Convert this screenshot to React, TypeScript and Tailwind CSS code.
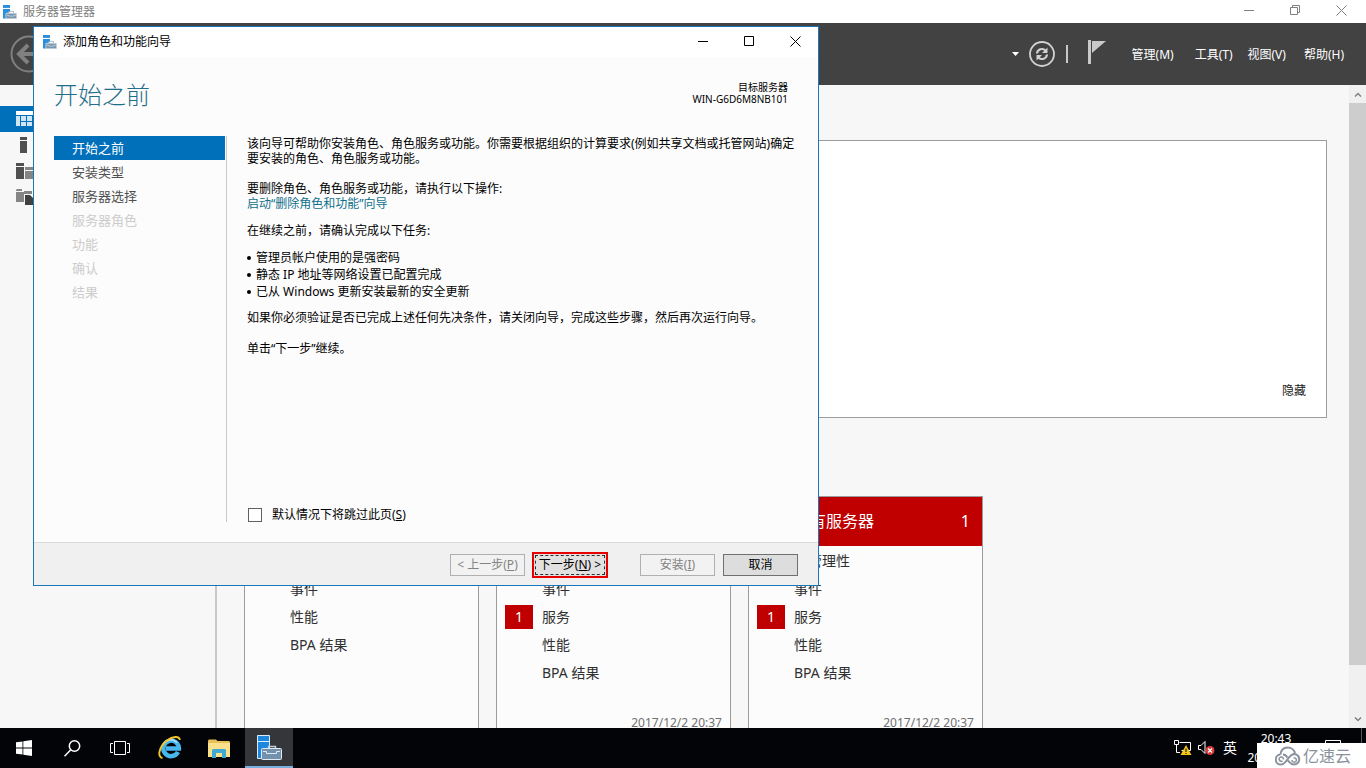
import type { ReactNode } from 'react';

const FONT = "font-['Noto_Sans','Noto_Sans_CJK_SC',sans-serif]";

const NAV_STEPS = [
  { label: '开始之前', state: 'active' },
  { label: '安装类型', state: 'enabled' },
  { label: '服务器选择', state: 'enabled' },
  { label: '服务器角色', state: 'disabled' },
  { label: '功能', state: 'disabled' },
  { label: '确认', state: 'disabled' },
  { label: '结果', state: 'disabled' },
];

const TASKS = ['管理员帐户使用的是强密码', '静态 IP 地址等网络设置已配置完成', '已从 Windows 更新安装最新的安全更新'];

interface Row { label: string; count?: number }

const TILES: { title?: string; count?: number; rows: Row[]; time?: string }[] = [
  { rows: [{ label: '' }, { label: '事件' }, { label: '性能' }, { label: 'BPA 结果' }] },
  {
    rows: [{ label: '' }, { label: '事件' }, { label: '服务', count: 1 }, { label: '性能' }, { label: 'BPA 结果' }],
    time: '2017/12/2 20:37',
  },
  {
    title: '所有服务器',
    count: 1,
    rows: [{ label: '可管理性' }, { label: '事件' }, { label: '服务', count: 1 }, { label: '性能' }, { label: 'BPA 结果' }],
    time: '2017/12/2 20:37',
  },
];

function ServerIcon({ className }: { className: string }) {
  return (
    <svg viewBox="0 0 24 24" className={className} aria-hidden="true">
      <path d="M0 0h12v5H0z" fill="#2b8fdc" />
      <path d="M0 7h12v5h-2v2H5v9H0z" fill="#2b8fdc" />
      <path d="M10 14v-3h8v3" fill="none" stroke="#9fb4c4" strokeWidth="1.5" />
      <rect x="5" y="14" width="18.5" height="9.5" rx="1" fill="#7896ad" stroke="#e6eef4" strokeWidth="1" />
      <path d="M6 17.5h4v1.5h9v-1.5h4" fill="none" stroke="#e6eef4" />
    </svg>
  );
}

/* Large variant with a light outline, for dark backgrounds */
function ServerTaskIcon() {
  return (
    <svg width="25" height="25" viewBox="0 0 25 25" aria-hidden="true">
      <path d="M.5.5h12v23H.5z" fill="#1c87dc" stroke="#d8ecfa" />
      <path d="M1 6.500h11" stroke="#d8ecfa" />
      <path d="M11.500 14v-2.500h7V14" fill="none" stroke="#c3d0da" strokeWidth="1.500" />
      <rect x="4.500" y="13.500" width="20" height="11" rx="1" fill="#7390ad" stroke="#dfe9f1" />
      <path d="M6 16.500h3.500v2h10v-2H23" fill="none" stroke="#dfe9f1" />
    </svg>
  );
}

function MinimizeIcon() {
  return (
    <svg width="11" height="11" viewBox="0 0 11 11" aria-hidden="true">
      <path d="M0 5.5h10" stroke="currentColor" />
    </svg>
  );
}

function MaximizeIcon() {
  return (
    <svg width="11" height="11" viewBox="0 0 11 11" aria-hidden="true">
      <path d="M.5.5h9v9H.5z" fill="none" stroke="currentColor" />
    </svg>
  );
}

function RestoreIcon() {
  return (
    <svg width="11" height="11" viewBox="0 0 11 11" aria-hidden="true">
      <path d="M.5 2.500h7v7h-7zM2.500 2.500v-2h7v7h-2" fill="none" stroke="currentColor" />
    </svg>
  );
}

function CloseIcon() {
  return (
    <svg width="11" height="11" viewBox="0 0 11 11" aria-hidden="true">
      <path d="M.5.500l10 10M10.500.500l-10 10" stroke="currentColor" />
    </svg>
  );
}

function WindowButton({ label, children }: { label: string; children: ReactNode }) {
  return (
    <button aria-label={label} className="flex h-full w-[46px] items-center justify-center">
      {children}
    </button>
  );
}

function ManagerHeader() {
  return (
    <header className="flex h-[62px] shrink-0 items-center bg-[#424242] pr-[22px] pl-[10px] text-xs text-white">
      <button aria-label="后退" className="text-[#808080]">
        <svg width="38" height="38" viewBox="0 0 38 38" fill="none" stroke="currentColor" aria-hidden="true">
          <circle cx="19" cy="19" r="17.500" strokeWidth="2" />
          <path d="M29 19H10M18 10l-9 9 9 9" strokeWidth="4" />
        </svg>
      </button>
      <div className="ml-auto flex items-center">
        <button aria-label="通知列表">
          <svg width="7" height="4" viewBox="0 0 7 4" aria-hidden="true"><path d="M0 0h7L3.500 4z" fill="#fff" /></svg>
        </button>
        <button aria-label="刷新" className="ml-[10px]">
          <svg width="26" height="26" viewBox="0 0 26 26" fill="none" stroke="#d2d2d2" aria-hidden="true">
            <circle cx="13" cy="13" r="12" strokeWidth="1.800" />
            <path d="M8 12.500a5 5 0 0 1 8.500-3M18 13.500a5 5 0 0 1-8.500 3" strokeWidth="2.200" />
            <path d="M18.500 6.500v5.500H13zM7.500 19.500V14H13z" fill="#d2d2d2" stroke="none" />
          </svg>
        </button>
        <span className="ml-[11px] h-[18px] w-0.5 bg-[#c8c8c8]" />
        <button aria-label="通知" className="ml-5">
          <svg width="18" height="24" viewBox="0 0 18 24" className="-mt-1" aria-hidden="true">
            <path d="M0 0h3v24H0zM4 1h14L4 13z" fill="#c9c9c9" />
          </svg>
        </button>
        <nav className="ml-[26px] flex pt-0.5">
          <button className="mr-[21px]">管理(M)</button>
          <button className="mr-[15px]">工具(T)</button>
          <button className="mr-[18px]">视图(V)</button>
          <button>帮助(H)</button>
        </nav>
      </div>
    </header>
  );
}

function Sidebar() {
  const item = 'flex h-[26px] w-full items-center pl-4';
  return (
    <aside className="w-[217px] shrink-0 border-r-2 border-[#c8c8c8] bg-[#f7f7f7] pt-[21px]">
      <button aria-label="仪表板" className={`${item} bg-[#0070ba]`}>
        <svg width="17" height="16" viewBox="0 0 17 16" aria-hidden="true">
          <path d="M0 0h17v4H0z" fill="#fff" />
          <path d="M0 5h4v10H0zM5 5h5v5H5zM11 5h5v5h-5zM5 11h5v4H5zM11 11h5v4h-5z" fill="#cfe5f4" />
        </svg>
      </button>
      <button aria-label="本地服务器" className={item}>
        <svg width="17" height="16" viewBox="0 0 17 16" aria-hidden="true">
          <path d="M4 0h7v3H4zM4 4h7v12H4z" fill="#505050" />
        </svg>
      </button>
      <button aria-label="所有服务器" className={item}>
        <svg width="17" height="16" viewBox="0 0 17 16" aria-hidden="true">
          <path d="M0 0h8v3H0zM0 4h8v12H0z" fill="#505050" />
          <path d="M9 4h8v3H9zM9 8h8v8H9z" fill="#858585" />
        </svg>
      </button>
      <button aria-label="文件和存储服务" className={item}>
        <svg width="17" height="16" viewBox="0 0 17 16" aria-hidden="true">
          <path d="M0 1l1-1h5v2H0zM0 3h8v10H0zM8 2h8v3H8z" fill="#858585" />
          <path d="M9 6h5l3 3v7H9z" fill="#404040" />
        </svg>
      </button>
    </aside>
  );
}

function Tile({ title, count, rows, time }: (typeof TILES)[number]) {
  return (
    <section className="flex h-[232px] w-[235px] shrink-0 flex-col border border-b-0 border-[#9c9c9c] bg-[#fcfcfc]">
      <h2 className="flex h-[49px] shrink-0 items-center bg-[#c00000] pr-3 pb-0.5 pl-[45px] text-base text-white">
        {title}
        <span className="ml-auto">{count}</span>
      </h2>
      <ul className="pt-px text-sm text-[#303030]">
        {rows.map(r => (
          <li key={r.label} className="flex h-7 items-center pl-2">
            <span className={`mr-[9px] flex h-6 w-7 items-center justify-center ${r.count ? 'bg-[#c00000] text-white' : ''}`}>
              {r.count}
            </span>
            {r.label}
          </li>
        ))}
      </ul>
      {time && <p className="mt-auto pr-2 text-right text-xs leading-[11px] text-[#707070]">{time}</p>}
    </section>
  );
}

function Dashboard() {
  return (
    <main className="min-w-0 flex-1 overflow-hidden bg-[#f7f7f7] pt-[55px] pr-[22px] pl-[27px]">
      <section className="flex h-[278px] items-end justify-end border border-[#9c9c9c] bg-white pr-5 pb-[18px]">
        <button className="text-xs text-[#202020]">隐藏</button>
      </section>
      <div className="mt-[78px] flex gap-[17px]">
        {TILES.map((t, i) => <Tile key={i} {...t} />)}
      </div>
    </main>
  );
}

function ScrollBar() {
  return (
    <div className="flex w-[17px] shrink-0 flex-col bg-[#f0f0f0] text-[#808080]">
      <button aria-label="向上滚动" className="flex h-[18px] items-center justify-center">
        <svg width="8" height="5" viewBox="0 0 8 5" aria-hidden="true"><path d="M1 4.500l3-3 3 3" fill="none" stroke="currentColor" strokeWidth="1.500" /></svg>
      </button>
      <div className="flex-1">
        <div className="h-[92.5%] bg-[#cdcdcd]" />
      </div>
      <button aria-label="向下滚动" className="flex h-[17px] items-center justify-center">
        <svg width="8" height="5" viewBox="0 0 8 5" aria-hidden="true"><path d="M1 .500l3 3 3-3" fill="none" stroke="currentColor" strokeWidth="1.500" /></svg>
      </button>
    </div>
  );
}

function Wizard() {
  const btn = 'h-[22px] w-[75px] border text-xs leading-5 whitespace-nowrap';
  const disabledBtn = `${btn} border-[#b0b0b0] bg-[#f2f2f2] text-[#838383]`;
  const stepCls: Record<string, string> = {
    active: 'bg-[#0070ba] text-white',
    enabled: 'text-[#505050]',
    disabled: 'text-[#cccccc]',
  };

  return (
    <div role="dialog" aria-label="添加角色和功能向导" className="absolute top-[26px] left-[33px] flex h-[560px] w-[786px] flex-col border border-[#1a78ba] bg-[#fcfcfc] text-black">
      {/* Title bar */}
      <div className="flex h-[30px] shrink-0 items-center bg-white pl-[9px]">
        <ServerIcon className="size-[14px]" />
        <span className="ml-[6px] text-xs">添加角色和功能向导</span>
        <div className="ml-auto flex h-7 self-start">
          <WindowButton label="最小化"><MinimizeIcon /></WindowButton>
          <WindowButton label="最大化"><MaximizeIcon /></WindowButton>
          <WindowButton label="关闭"><CloseIcon /></WindowButton>
        </div>
      </div>

      {/* Heading */}
      <div className="flex h-[79px] shrink-0 items-start justify-between pr-[30px] pl-5">
        <h1 className="pt-5 text-2xl leading-9 font-light text-[#1f6f8b]">开始之前</h1>
        <p className="pt-6 text-right text-[10px] leading-3">目标服务器<br />WIN-G6D6M8NB101</p>
      </div>

      {/* Steps and page */}
      <div className="flex min-h-0 flex-1 pr-[18px] pb-5 pl-5">
        <nav className="w-[173px] shrink-0 border-r border-[#c8c8c8] pr-px">
          {NAV_STEPS.map(s => (
            <button
              key={s.label}
              disabled={s.state === 'disabled'}
              className={`block h-6 w-full pl-[18px] text-left text-[13px] leading-6 ${stepCls[s.state]}`}
            >
              {s.label}
            </button>
          ))}
        </nav>
        <div className="flex flex-1 flex-col pl-5 text-xs leading-[15px]">
          <p>该向导可帮助你安装角色、角色服务或功能。你需要根据组织的计算要求(例如共享文档或托管网站)确定要安装的角色、角色服务或功能。</p>
          <p className="mt-[15px]">
            要删除角色、角色服务或功能，请执行以下操作:<br />
            <a href="#remove" className="text-[#10708c]">启动“删除角色和功能”向导</a>
          </p>
          <p className="mt-3">在继续之前，请确认完成以下任务:</p>
          <ul className="mt-[11px] leading-[17px]">
            {TASKS.map(t => (
              <li key={t} className="flex items-center gap-[5px]">
                <span className="size-1 rounded-full bg-black" />
                {t}
              </li>
            ))}
          </ul>
          <p className="mt-[10px]">如果你必须验证是否已完成上述任何先决条件，请关闭向导，完成这些步骤，然后再次运行向导。</p>
          <p className="mt-4">单击“下一步”继续。</p>
          <label className="mt-auto flex items-center gap-[10px]">
            <input type="checkbox" className="ml-px size-[14px] appearance-none border border-[#606060] bg-white" />
            <span>默认情况下将跳过此页(<u>S</u>)</span>
          </label>
        </div>
      </div>

      {/* Footer */}
      <div className="flex h-[43px] shrink-0 items-center justify-end border-t border-[#dcdcdc] bg-[#f0f0f0] pt-0.5 pr-5">
        <button disabled className={disabledBtn}>&lt; 上一步(<u>P</u>)</button>
        <button className="ml-[7px] h-[26px] w-[76px] border-2 border-[#e60000] bg-[#e1e1e1] p-px text-xs whitespace-nowrap">
          <span className="block h-full border border-dashed border-[#303030] leading-[18px]">下一步(<u>N</u>) &gt;</span>
        </button>
        <button disabled className={`ml-8 ${disabledBtn}`}>安装(<u>I</u>)</button>
        <button className={`ml-2 ${btn} border-[#707070] bg-[#dddddd]`}>取消</button>
      </div>
    </div>
  );
}

function Taskbar() {
  const item = 'flex h-full w-12 items-center justify-center';
  return (
    <footer className="relative flex h-10 shrink-0 bg-[#020408] text-white">
      <button aria-label="开始" className={item}>
        <svg width="16" height="16" viewBox="0 0 16 16" aria-hidden="true">
          <path d="M0 2.300L6.500 1.400v6.200H0zM7.300 1.300L16 0v7.600H7.300zM0 8.400h6.500v6.200L0 13.700zM7.300 8.400H16V16l-8.700-1.300z" fill="#fff" />
        </svg>
      </button>
      <button aria-label="搜索" className={item}>
        <svg width="17" height="17" viewBox="0 0 17 17" fill="none" stroke="#fff" strokeWidth="1.500" aria-hidden="true">
          <circle cx="10.500" cy="6" r="5.200" />
          <path d="M6.800 9.700L.500 16.300" />
        </svg>
      </button>
      <button aria-label="任务视图" className={item}>
        <svg width="20" height="14" viewBox="0 0 20 14" fill="none" stroke="#fff" aria-hidden="true">
          <path d="M4.500.500h11v13h-11zM3 2.500H.500v9H3M17 2.500h2.500v9H17" />
        </svg>
      </button>
      <button aria-label="Internet Explorer" className={`ml-0.5 ${item}`}>
        <svg width="24" height="24" viewBox="0 0 24 24" fill="none" aria-hidden="true">
          <path d="M20 16a7.800 7.800 0 1 1 .900-3.500H8" stroke="#47b7ee" strokeWidth="4.500" />
          <path d="M5.500 8a8.500 8.500 0 0 1 13.500-1.500" stroke="#b5e8fc" strokeWidth="1.500" />
          <path d="M4.500 22C-1.500 21 1.500 10 9 4.500 14.500.500 21.500-.500 21.800 4" stroke="#f5c52c" strokeWidth="1.900" />
        </svg>
      </button>
      <button aria-label="文件资源管理器" className={`ml-px ${item}`}>
        <svg width="22" height="19" viewBox="0 0 22 19" aria-hidden="true">
          <path d="M0 1.500L1 .500h7l1.500 1.500H21l1 1V18H0z" fill="#e9bf58" />
          <path d="M0 4h22v14H0z" fill="#fbe08c" />
          <path d="M4 19v-8l1-1h12l1 1v8h-4v-5H8v5z" fill="#3fa9d6" />
        </svg>
      </button>
      <button aria-label="服务器管理器" className="ml-0.5 flex h-full w-12 items-center justify-center border-b-2 border-[#76b0e0] bg-[#35363a]">
        <ServerTaskIcon />
      </button>

      {/* Tray */}
      <div className="ml-auto flex items-center pr-1">
        <svg width="18" height="16" viewBox="0 0 18 16" aria-label="网络">
          <path d="M5.500 2.500h11v8h-9M.500.500h4v4h-4zM2.500 5v7.500H6" fill="none" stroke="#fff" />
          <path d="M12 5l5.500 10h-11z" fill="#f5c518" />
          <path d="M12 8.500v3.500M12 13v1" stroke="#222" strokeWidth="1.200" />
        </svg>
        <svg width="18" height="16" viewBox="0 0 18 16" className="ml-[6px]" aria-label="音量">
          <path d="M.500 5.500H3l4-4v12l-4-4H.500z" fill="none" stroke="#fff" />
          <circle cx="12" cy="10.500" r="4.500" fill="#d93a3a" />
          <path d="M10 8.500l4 4M14 8.500l-4 4" stroke="#fff" strokeWidth="1.200" />
        </svg>
        <span className="ml-[7px] text-sm">英</span>
        <div className="ml-2 w-[62px] text-center text-xs leading-[19px]">20:43<br />2017/12/2</div>
        <svg width="16" height="16" viewBox="0 0 16 16" className="ml-[18px]" aria-label="操作中心">
          <path d="M.500.500h15v11h-4v3l-3-3h-8z" fill="none" stroke="#fff" />
        </svg>
        <span className="ml-5 h-full w-px bg-[#55585c]" />
      </div>

      {/* Brand tag over the tray corner */}
      <div className="absolute right-0 bottom-0 flex h-[25px] w-[109px] items-center bg-white pl-[18px] text-[#8b929c]">
        <svg width="26" height="20" viewBox="0 0 26 20" fill="none" stroke="currentColor" strokeWidth="2" aria-hidden="true">
          <path d="M5.500 8.500C5.500 4.500 8.500 1.500 12.500 1.500S19.500 4 20 7.500" />
          <path d="M5.500 8.500A5 5 0 0 0 6 18.500c5.500 0 7-9.500 13-10.500a5.200 5.200 0 1 1 0 10.500c-3 0-4.500-2-6-4" />
          <path d="M8.500 13.500a2.200 2.200 0 1 0-1 1.500M17 14a2.200 2.200 0 1 0 1.500-2" strokeWidth="1.500" />
          <path d="M8 8.500c2.500 0 3.500 1.500 4.500 3" />
        </svg>
        <span className="ml-0.5 text-base leading-6">亿速云</span>
      </div>
    </footer>
  );
}

export default function App() {
  return (
    <div className={`relative flex h-screen flex-col overflow-hidden bg-[#f7f7f7] ${FONT}`}>
      <div className="flex h-[23px] shrink-0 items-center bg-white pl-[3px] text-[#808080]">
        <ServerIcon className="size-[14px]" />
        <span className="ml-[6px] text-xs leading-5">服务器管理器</span>
        <div className="ml-auto flex h-5 self-start pr-0.5">
          <WindowButton label="最小化"><MinimizeIcon /></WindowButton>
          <WindowButton label="还原"><RestoreIcon /></WindowButton>
          <WindowButton label="关闭"><CloseIcon /></WindowButton>
        </div>
      </div>
      <ManagerHeader />
      <div className="flex min-h-0 flex-1">
        <Sidebar />
        <Dashboard />
        <ScrollBar />
      </div>
      <Taskbar />
      <Wizard />
    </div>
  );
}
